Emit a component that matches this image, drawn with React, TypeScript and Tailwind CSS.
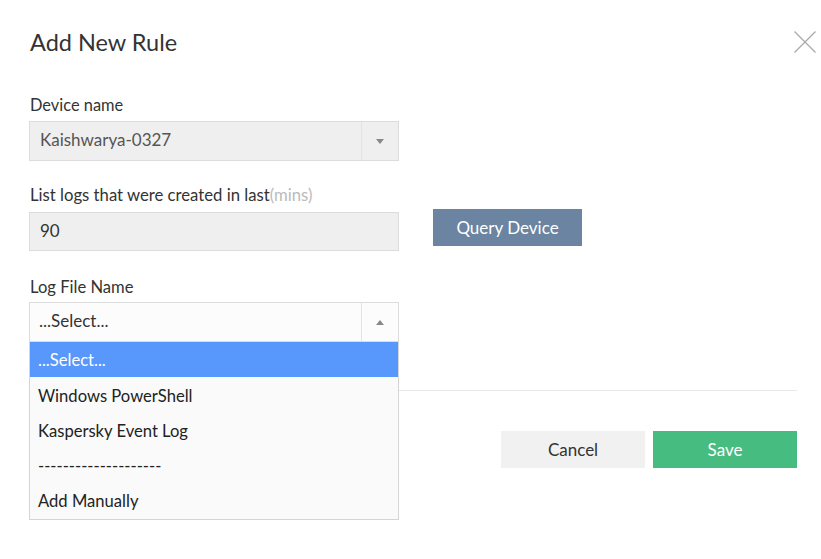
import React from 'react';

const options = ['...Select...', 'Windows PowerShell', 'Kaspersky Event Log', '--------------------', 'Add Manually'];

const Arrow: React.FC<{ up?: boolean }> = ({ up }) => (
  <div className="w-[37px] h-full border-l border-[#e3e3e3] flex items-center justify-center">
    <div
      className={
        up
          ? 'w-0 h-0 border-x-[4px] border-x-transparent border-b-[5px] border-b-[#888]'
          : 'w-0 h-0 border-x-[4px] border-x-transparent border-t-[5px] border-t-[#888]'
      }
    />
  </div>
);

const App: React.FC = () => {
  return (
    <div className="w-[821px] h-[559px] bg-white font-['Lato',sans-serif] text-[#333] relative">
      <div className="flex items-start justify-between pl-[30px] pr-[5px] pt-[27px]">
        <h2 className="text-[23.5px] leading-[30px] text-[#333]">Add New Rule</h2>
        <button className="mt-[4px] w-[22px] h-[22px]">
          <svg width="22" height="22" viewBox="0 0 22 22">
            <path d="M0.5 0.5 L21.5 21.5 M21.5 0.5 L0.5 21.5" stroke="#aaa" strokeWidth="1.3" fill="none" />
          </svg>
        </button>
      </div>

      <div className="pl-[29px] mt-[38px]">
        <div className="pl-px text-[16.4px] leading-[20px] mb-[6px]">Device name</div>
        <div className="w-[370px] h-[40px] border border-[#dcdcdc] bg-[#efefef] flex">
          <div className="flex-1 flex items-center pl-[10px] pb-[3px] text-[17px] text-[#555]">Kaishwarya-0327</div>
          <Arrow />
        </div>

        <div className="mt-[24px] flex items-end">
          <div>
            <div className="pl-px text-[16.7px] leading-[20px] mb-[7px]">
              List logs that were created in last<span className="text-[#bbb]">(mins)</span>
            </div>
            <div className="w-[370px] h-[39px] border border-[#dcdcdc] bg-[#efefef] flex items-center pl-[10px] pb-[2px] text-[17px] text-[#333]">
              90
            </div>
          </div>
          <button className="ml-[34px] mb-[5px] w-[149px] h-[37px] bg-[#6a84a2] text-white text-[17px]">
            Query Device
          </button>
        </div>

        <div className="mt-[26px] pl-px text-[16.6px] leading-[20px] mb-[5px]">Log File Name</div>
        <div className="relative w-[370px]">
          <div className="w-[370px] h-[40px] border border-[#dcdcdc] bg-[#fcfcfc] flex">
            <div className="flex-1 flex items-center pl-[9px] pb-[2px] text-[17px] text-[#333]">...Select...</div>
            <Arrow up />
          </div>
          <div className="absolute top-full left-0 w-[370px] border border-t-0 border-[#d4d4d4] bg-[#fafafa] pb-[2px] z-10">
            {options.map((o, i) => (
              <div
                key={o}
                className={
                  i === 0
                    ? 'h-[35px] flex items-center pl-[8px] pt-[1px] text-[16.6px] bg-[#5897fb] text-white'
                    : 'h-[35px] flex items-center pl-[8px] pt-[4px] text-[16.6px] text-[#222]'
                }
              >
                {o}
              </div>
            ))}
          </div>
        </div>
      </div>

      <div className="mt-[48px] ml-[30px] mr-[24px] border-t border-[#e8e8e8]" />

      <div className="mt-[40px] flex justify-end gap-[8px] pr-[24px]">
        <button className="w-[144px] h-[37px] bg-[#f1f1f1] text-[#333] text-[17px]">Cancel</button>
        <button className="w-[144px] h-[37px] bg-[#47bc80] text-white text-[17px]">Save</button>
      </div>
    </div>
  );
};

export default App;
